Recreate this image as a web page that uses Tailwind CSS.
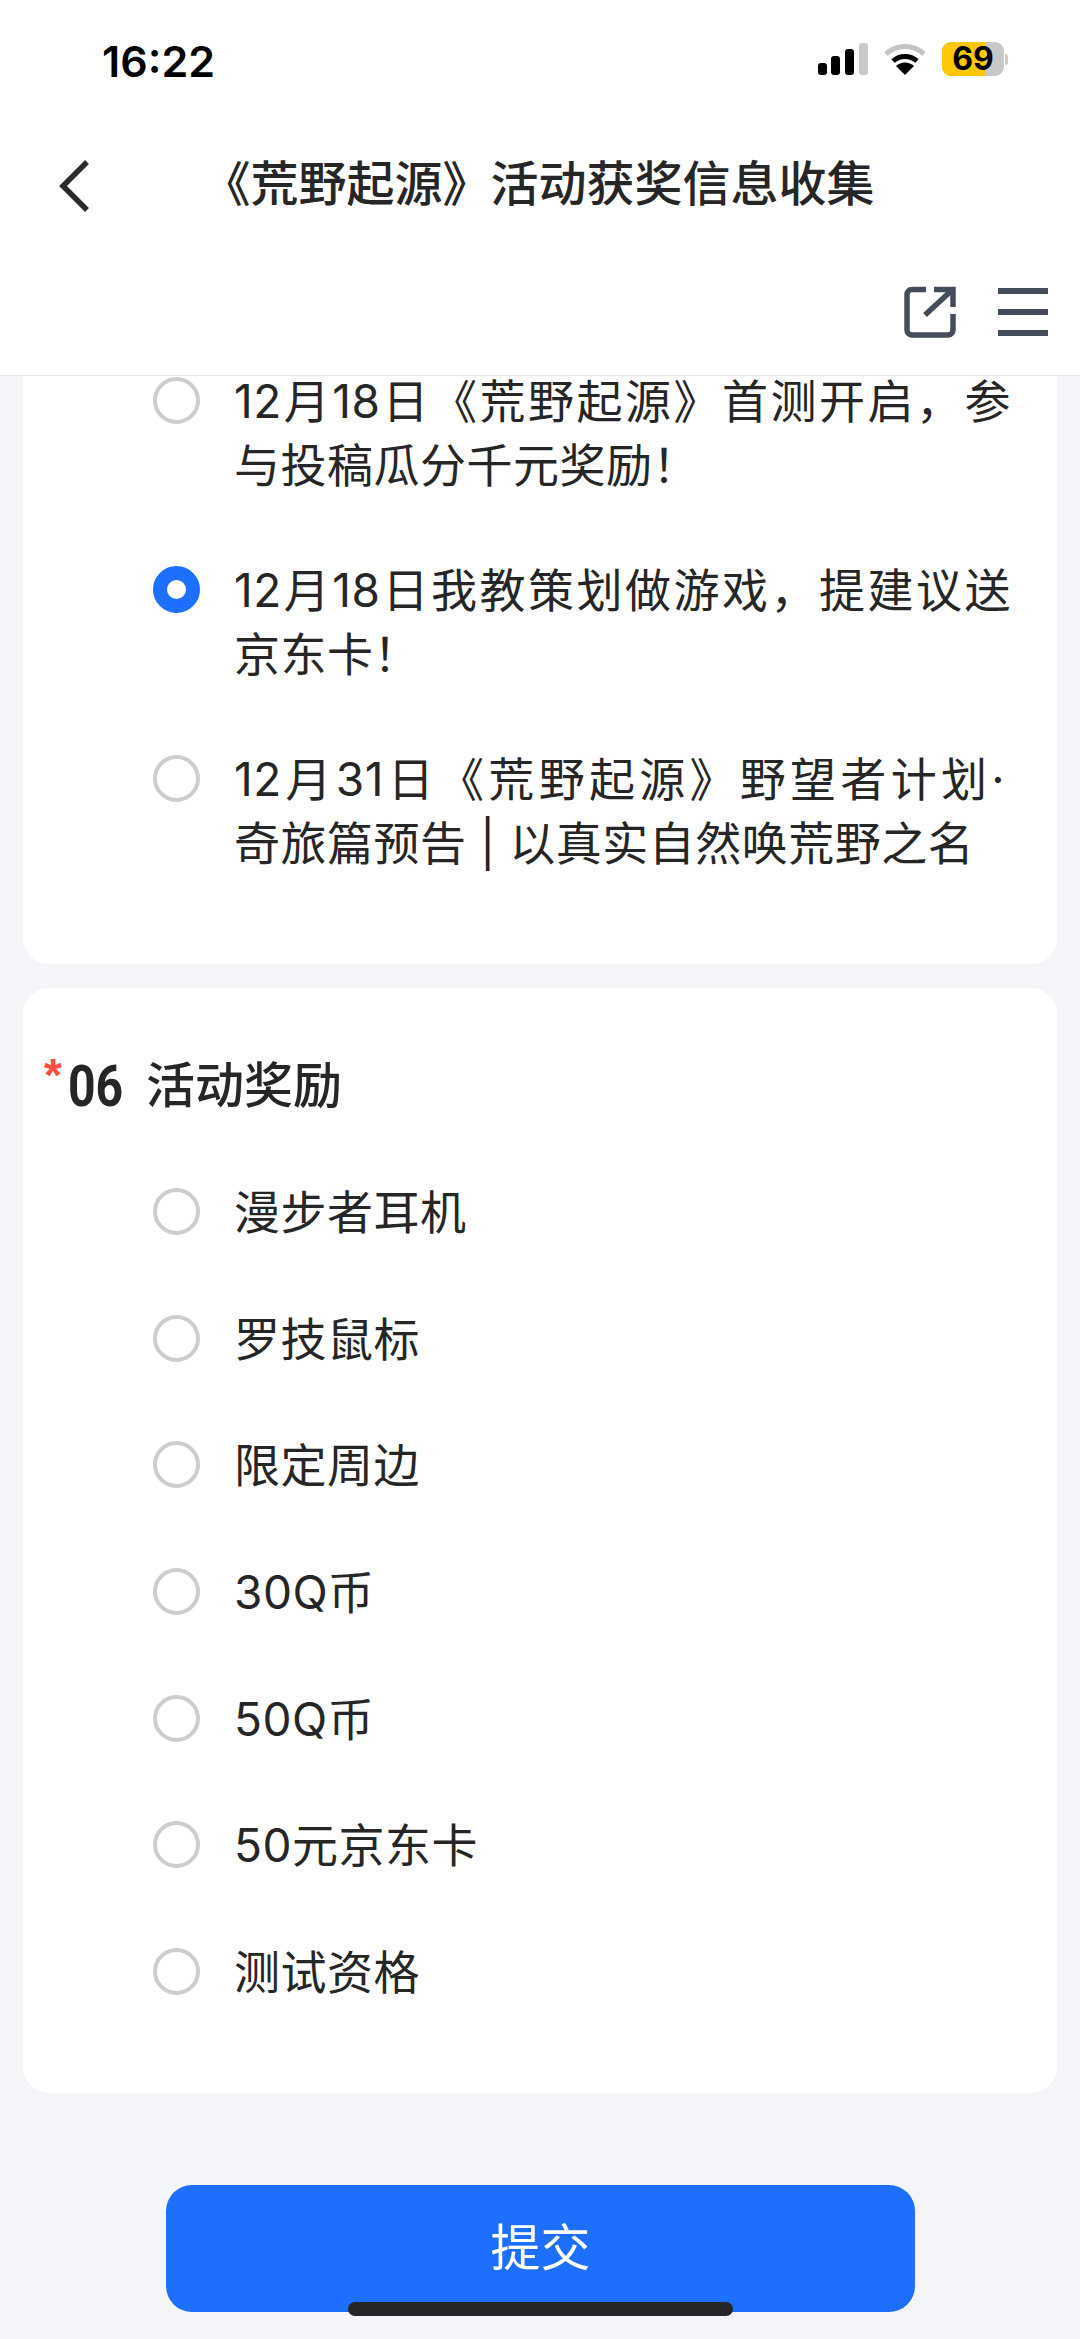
<!DOCTYPE html>
<html lang="zh">
<head>
<meta charset="utf-8">
<script src="https://cdn.jsdelivr.net/npm/@tailwindcss/browser@4"></script>
</head>
<body class="m-0">
<div class="relative w-[1080px] h-[2339px] overflow-hidden flex flex-col bg-[#f3f5f8] text-[#262626] font-['Inter','Noto_Sans_CJK_SC',sans-serif]">
  <header class="h-[376px] shrink-0 bg-white border-b border-[#e2e4e8] flex flex-col">
    <div class="h-[122px] shrink-0 flex items-start justify-between pl-[102px] pr-[72px] pt-[38px]">
      <span class="text-[43px] leading-[46px] font-semibold text-black">16:22</span>
      <div class="flex items-center gap-[16px] h-[40px] mt-[1px]">
        <svg width="50" height="32" viewBox="0 0 50 32"><rect x="0" y="20" width="9" height="12" rx="3" fill="#000"/><rect x="13" y="13" width="9" height="19" rx="3" fill="#000"/><rect x="27" y="6" width="9" height="26" rx="3" fill="#000"/><rect x="41" y="0" width="9" height="32" rx="3" fill="#c9c9c9"/></svg>
        <svg width="42" height="33" viewBox="0 0 42 33"><path d="M2 11 A28 28 0 0 1 40 11" fill="none" stroke="#c4c4c4" stroke-width="5"/><path d="M9 18 A18 18 0 0 1 33 18" fill="none" stroke="#000" stroke-width="5"/><path d="M21 32 L12 23 A13 13 0 0 1 30 23 Z" fill="#000"/></svg>
        <div class="flex items-center">
          <div class="relative w-[62px] h-[34px] rounded-[9px] bg-[#c8c8c8] flex items-center justify-center">
            <div class="absolute left-0 top-0 bottom-0 w-[43px] rounded-l-[9px] bg-[#fdc803]"></div>
            <span class="relative text-[32px] leading-[34px] font-bold text-black">69</span>
          </div>
          <div class="w-[3px] h-[11px] ml-[1px] rounded-r-full bg-[#c8c8c8]"></div>
        </div>
      </div>
    </div>
    <div class="h-[124px] shrink-0 relative flex items-center justify-center">
      <svg class="absolute left-[58px] top-[37px]" width="32" height="54" viewBox="0 0 32 54"><path d="M29 3 L5 27 L29 51" fill="none" stroke="#2b2b2b" stroke-width="5.5"/></svg>
      <h1 class="text-[48px] leading-[64px] font-medium text-[#262626] ml-[-3px]">《荒野起源》活动获奖信息收集</h1>
    </div>
    <div class="flex justify-end items-center gap-[42px] pr-[32px] pt-[40px]">
      <svg width="52" height="52" viewBox="0 0 52 52" fill="none" stroke="#454c59" stroke-width="5.5"><path d="M22 3.5 H8 a5 5 0 0 0 -5 5 V44 a5 5 0 0 0 5 5 H44 a5 5 0 0 0 5 -5 V28"/><path d="M30 3.5 H49 V21"/><path d="M47 5 L21 29"/></svg>
      <div class="flex flex-col gap-[15px] w-[50px]">
        <div class="h-[6px] bg-[#454c59]"></div>
        <div class="h-[6px] bg-[#454c59]"></div>
        <div class="h-[6px] bg-[#454c59]"></div>
      </div>
    </div>
  </header>

  <main class="flex-1 min-h-0 overflow-hidden px-[23px] flex flex-col">
    <section class="-mt-[7px] bg-white rounded-b-[26px] pl-[130px] pr-[46px] pb-[89px] flex flex-col gap-[61px] text-[46px] leading-[64px] tracking-[0.5px]">
      <div class="flex gap-[34px]">
        <span class="w-[47px] h-[47px] mt-[8px] shrink-0 rounded-full border-[4px] border-[#cdcdcd]"></span>
        <p class="flex-1"><span class="block text-justify [text-align-last:justify]">12月18日《荒野起源》首测开启，参</span><span class="block">与投稿瓜分千元奖励！</span></p>
      </div>
      <div class="flex gap-[34px]">
        <span class="w-[47px] h-[47px] mt-[8px] shrink-0 rounded-full border-[14px] border-[#1e6fff] bg-white"></span>
        <p class="flex-1"><span class="block text-justify [text-align-last:justify]">12月18日我教策划做游戏，提建议送</span><span class="block">京东卡！</span></p>
      </div>
      <div class="flex gap-[34px]">
        <span class="w-[47px] h-[47px] mt-[8px] shrink-0 rounded-full border-[4px] border-[#cdcdcd]"></span>
        <p class="flex-1"><span class="block pr-[6px] text-justify [text-align-last:justify]">12月31日《荒野起源》野望者计划·</span><span class="block">奇旅篇预告 | 以真实自然唤荒野之名</span></p>
      </div>
    </section>

    <section class="mt-[24px] bg-white rounded-[26px] pb-[89px]">
      <div class="pl-[21px] pt-[62px] h-[192px] flex items-start">
        <span class="mt-[2px] text-[46px] leading-[46px] font-bold text-[#ff4d3f] font-['Liberation_Sans'] w-[24px]">*</span>
        <h2 class="text-[49px] leading-[72px] font-medium flex gap-[24px]"><span class="inline-block w-[54px] origin-left scale-x-[0.83] text-[58px] font-['Roboto'] font-bold">06</span><span>活动奖励</span></h2>
      </div>
      <ul class="pl-[130px] pr-[38px] flex flex-col gap-[62.7px] text-[46px] leading-[64px] tracking-[0.5px]">
        <li class="flex gap-[34px]"><span class="w-[47px] h-[47px] mt-[8px] shrink-0 rounded-full border-[4px] border-[#cdcdcd]"></span>漫步者耳机</li>
        <li class="flex gap-[34px]"><span class="w-[47px] h-[47px] mt-[8px] shrink-0 rounded-full border-[4px] border-[#cdcdcd]"></span>罗技鼠标</li>
        <li class="flex gap-[34px]"><span class="w-[47px] h-[47px] mt-[8px] shrink-0 rounded-full border-[4px] border-[#cdcdcd]"></span>限定周边</li>
        <li class="flex gap-[34px]"><span class="w-[47px] h-[47px] mt-[8px] shrink-0 rounded-full border-[4px] border-[#cdcdcd]"></span>30Q币</li>
        <li class="flex gap-[34px]"><span class="w-[47px] h-[47px] mt-[8px] shrink-0 rounded-full border-[4px] border-[#cdcdcd]"></span>50Q币</li>
        <li class="flex gap-[34px]"><span class="w-[47px] h-[47px] mt-[8px] shrink-0 rounded-full border-[4px] border-[#cdcdcd]"></span>50元京东卡</li>
        <li class="flex gap-[34px]"><span class="w-[47px] h-[47px] mt-[8px] shrink-0 rounded-full border-[4px] border-[#cdcdcd]"></span>测试资格</li>
      </ul>
    </section>

    <button class="mt-[92px] ml-[143px] w-[749px] h-[127px] shrink-0 rounded-[26px] bg-[#1e6fff] text-white text-[50px] font-normal flex items-center justify-center">提交</button>
  </main>

  <div class="absolute left-[348px] top-[2302px] w-[385px] h-[14px] rounded-full bg-[#262626]"></div>
</div>
</body>
</html>
